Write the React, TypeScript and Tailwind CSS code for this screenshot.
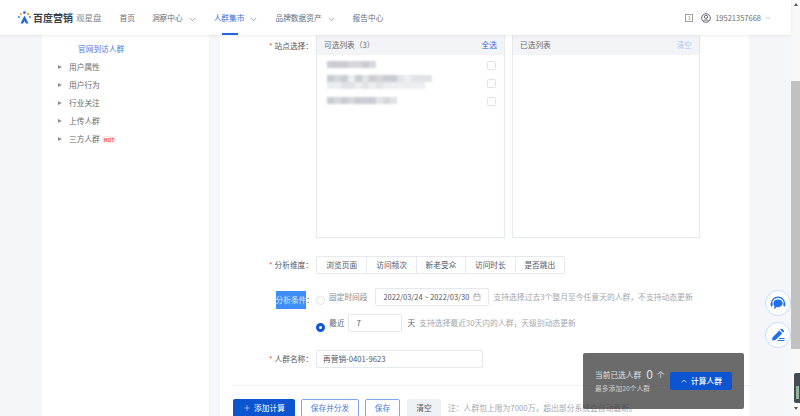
import { ChevronDown, ChevronUp, Calendar, Plus } from 'lucide-react';

const FONT = 'font-["Noto_Sans_CJK_SC","Inter",sans-serif]';

function NavItem({ label, active, menu }: { label: string; active?: boolean; menu?: boolean }) {
  return (
    <div
      className={`relative flex h-full items-center gap-[5px] text-[7.7px] ${
        active ? 'text-[#2f6fe0]' : 'text-[#6a6d75]'
      }`}
    >
      <span>{label}</span>
      {menu && <ChevronDown size={9} strokeWidth={1.6} className="translate-y-[2px] text-[#666a72]" />}
      {active && <div className="absolute bottom-0 left-[8px] h-[2px] w-[16px] bg-[#1f66e0]" />}
    </div>
  );
}

function TreeItem({ label, hot }: { label: string; hot?: boolean }) {
  return (
    <div className="flex h-[18px] items-center text-[7.7px] text-[#666a72]">
      <span className="mr-[7px] h-0 w-0 border-y-[2.5px] border-l-[4px] border-y-transparent border-l-[#8c9099]" />
      <span>{label}</span>
      {hot && (
        <span className="ml-[2px] rounded-[1px] bg-[#fdeaea] px-[2px] text-[5px] leading-[7px] font-bold text-[#e8605c]">
          HOT
        </span>
      )}
    </div>
  );
}

// site names are pixelated in the shot, so these are just colour blocks
function Mosaic({ lines }: { lines: string[][] }) {
  return (
    <div className="-translate-y-[1px] blur-[0.8px]">
      {lines.map((line, i) => (
        <div key={i} className="flex">
          {line.map((color, j) => (
            <div key={j} className={`h-[7px] w-[7px] ${color}`} />
          ))}
        </div>
      ))}
    </div>
  );
}

function BlurRow({ lines }: { lines: string[][] }) {
  return (
    <div className="flex h-[18px] items-center justify-between pr-[8px] pl-[10px]">
      <Mosaic lines={lines} />
      <div className="h-[9px] w-[9px] rounded-[1.5px] border border-[#dfe2ea] bg-white" />
    </div>
  );
}

function Label({ text }: { text: string }) {
  return (
    <div className="w-[96px] shrink-0 pr-[3px] text-right text-[7.7px] text-[#55585f]">
      <span className="mr-[2px] text-[#e0524d]">*</span>
      {text}：
    </div>
  );
}

const A = 'bg-[#c9ccd3]';
const B = 'bg-[#d6d7da]';
const C = 'bg-[#e1e3e7]';
const D = 'bg-[#eceef1]';

export default function App() {
  return (
    <div className={`relative flex h-[416px] w-[800px] overflow-hidden bg-white ${FONT}`}>
      <div className="flex w-[791px] flex-col">
        <header className="relative z-10 flex h-[35px] shrink-0 items-center bg-white pl-[18px] shadow-[0_1px_3px_rgba(0,0,0,0.07)]">
          <svg width="13" height="13" viewBox="0 0 13 13" className="mr-[2px]">
            <circle cx="6.5" cy="1.6" r="1.4" fill="#2f6fe0" />
            <circle cx="3" cy="3" r="1.1" fill="#f2a33a" />
            <circle cx="10" cy="3" r="1.2" fill="#f2a33a" />
            <circle cx="0.9" cy="6" r="0.9" fill="#2f6fe0" />
            <circle cx="12" cy="6" r="0.9" fill="#2f6fe0" />
            <path d="M6.5 4.5L10.5 12.5H8L6.5 10L5 12.5H2.5Z" fill="#1f66e0" />
          </svg>
          <span className="text-[10px] leading-none font-bold text-[#3c3f46]">百度营销</span>
          <span className="ml-[3px] text-[8.5px] text-[#85888f]">观星盘</span>
          <nav className="ml-[18px] flex h-full gap-[17px]">
            <NavItem label="首页" />
            <NavItem label="洞察中心" menu />
            <NavItem label="人群集市" menu active />
            <NavItem label="品牌数据资产" menu />
            <NavItem label="报告中心" />
          </nav>
          <div className="ml-auto flex items-center pr-[19px] text-[7.5px] text-[#6a6d75]">
            <div className="mr-[8px] flex h-[8px] w-[8px] items-center justify-center border border-[#9a9da3] text-[5px]">
              1
            </div>
            <svg width="10" height="10" viewBox="0 0 10 10" fill="none" stroke="#55585f" strokeWidth="0.9" className="mr-[4px]">
              <circle cx="5" cy="5" r="4.3" />
              <circle cx="5" cy="3.9" r="1.6" />
              <path d="M2.2 8.2C3 6.6 7 6.6 7.8 8.2" />
            </svg>
            <span>19521357668</span>
            <ChevronDown size={8} strokeWidth={1.2} className="ml-[3px] text-[#85888f]" />
          </div>
        </header>

        <div className="flex min-h-0 flex-1 bg-[#f5f6fa] pl-[42px]">
          <aside className="w-[167px] bg-white pt-[5px]">
            <div className="flex h-[18px] items-center pl-[36px] text-[7.7px] text-[#4a78d8]">官网到访人群</div>
            <div className="pl-[16px]">
              <TreeItem label="用户属性" />
              <TreeItem label="用户行为" />
              <TreeItem label="行业关注" />
              <TreeItem label="上传人群" />
              <TreeItem label="三方人群" hot />
            </div>
          </aside>

          <main className="ml-[11px] w-[529px] bg-white">
            <div className="flex h-[203px]">
              <div className="w-[96px] pt-[5px]">
                <Label text="站点选择" />
              </div>
              <div className="flex h-full w-[189px] flex-col border border-t-0 border-[#e6e8f0]">
                <div className="flex h-[20px] shrink-0 items-center justify-between bg-[#f3f4f8] px-[7px] text-[7.7px] text-[#666a72]">
                  <span>可选列表（3）</span>
                  <span className="text-[#2f6fe0]">全选</span>
                </div>
                <div className="pt-[1px]">
                  <BlurRow lines={[[A, A, A, B, B, A, B]]} />
                  <BlurRow
                    lines={[
                      [A, B, A, D, A, C, A, B, A, A, C, D, C, C, C],
                      [D, D, C, C, D, C, D, C, D, D, D, D, D, D],
                    ]}
                  />
                  <BlurRow lines={[[A, B, A, B, A, A, A, C, B, C]]} />
                </div>
              </div>
              <div className="ml-[7px] flex h-full w-[188px] flex-col border border-t-0 border-[#e6e8f0]">
                <div className="flex h-[20px] shrink-0 items-center justify-between bg-[#f3f4f8] px-[7px] text-[7.7px] text-[#666a72]">
                  <span>已选列表</span>
                  <span className="text-[#b3ccf5]">清空</span>
                </div>
              </div>
            </div>

            <div className="mt-[18px] flex h-[18px] items-center">
              <Label text="分析维度" />
              <div className="flex h-[18px] rounded-[2px] border border-[#e6e8f0] text-[7.7px] text-[#55585f]">
                {['浏览页面', '访问频次', '新老受众', '访问时长', '是否跳出'].map((t, i) => (
                  <div
                    key={t}
                    className={`flex w-[49.4px] items-center justify-center ${i > 0 ? 'border-l border-[#e6e8f0]' : ''}`}
                  >
                    {t}
                  </div>
                ))}
              </div>
            </div>

            <div className="mt-[14px] flex h-[44px]">
              <div className="flex h-[24px] w-[96px] items-center justify-end pr-[2px] text-[7.7px] text-[#55585f]">
                <span className="bg-[#3f8ef7] py-[3px] leading-[12px] text-[#dbe9ff]">分析条件</span>：
              </div>
              <div className="flex flex-col gap-[8px]">
                <div className="flex h-[18px] items-center">
                  <span className="mt-[6px] h-[9px] w-[9px] rounded-full border border-[#dfe2ea]" />
                  <span className="ml-[4px] text-[7.7px] text-[#85888f]">固定时间段</span>
                  <div className="ml-[8px] flex h-[18px] w-[114px] items-center justify-between rounded-[2px] border border-[#e6e8f0] pr-[7px] pl-[7px] text-[7.5px] text-[#55585f]">
                    <span className="whitespace-nowrap">2022/03/24 ~ 2022/03/30</span>
                    <Calendar size={8} strokeWidth={1.2} className="shrink-0 text-[#666a72]" />
                  </div>
                  <span className="ml-[4px] whitespace-nowrap text-[7.8px] text-[#a5a8ae]">支持选择过去3个整月至今任意天的人群，不支持动态更新</span>
                </div>
                <div className="flex h-[18px] items-center">
                  <span className="mt-[8px] h-[9px] w-[9px] rounded-full border-[3px] border-[#1256d2] bg-white" />
                  <span className="ml-[4px] text-[7.7px] text-[#666a72]">最近</span>
                  <div className="ml-[4px] flex h-[18px] w-[54px] items-center rounded-[2px] border border-[#e6e8f0] pl-[7px] text-[7.7px] text-[#55585f]">
                    7
                  </div>
                  <span className="ml-[5px] text-[7.7px] text-[#666a72]">天</span>
                  <span className="ml-[4px] whitespace-nowrap text-[7.8px] text-[#a5a8ae]">支持选择最近30天内的人群，天级别动态更新</span>
                </div>
              </div>
            </div>

            <div className="mt-[18px] flex h-[18px] items-center">
              <Label text="人群名称" />
              <div className="flex h-[18px] w-[167px] items-center rounded-[2px] border border-[#e6e8f0] pl-[6px] text-[7.7px] text-[#55585f]">
                再营销-0401-9623
              </div>
            </div>

            <div className="mt-[17px] ml-[13px] border-t border-[#f0f1f5]" />

            <div className="mt-[13px] ml-[13px] flex h-[18px] items-center text-[7.7px]">
              <button className="flex h-[18px] w-[62px] items-center justify-center gap-[3px] rounded-[2px] bg-[#0d54d0] text-white">
                <Plus size={8} strokeWidth={1.5} />
                添加计算
              </button>
              <button className="ml-[6px] h-[18px] w-[58px] rounded-[2px] border border-[#7ea6ea] text-[#4d7bd0]">保存并分发</button>
              <button className="ml-[6px] h-[18px] w-[35px] rounded-[2px] border border-[#7ea6ea] text-[#4d7bd0]">保存</button>
              <button className="ml-[7px] h-[18px] w-[34px] rounded-[2px] bg-[#eef0f5] text-[#55585f]">清空</button>
              <span className="ml-[7px] whitespace-nowrap text-[7.8px] text-[#a5a8ae]">注：人群包上限为7000万，超出部分系统会自动截断。</span>
            </div>
          </main>
        </div>
      </div>

      <div className="flex w-[9px] flex-col items-center bg-[#f8f8f8]">
        <span className="mt-[3px] h-0 w-0 border-x-[2px] border-b-[3px] border-x-transparent border-b-[#555]" />
        <div className="mt-[75px] h-[268px] w-full bg-[#c1c1c1]" />
        <span className="mt-[58px] h-0 w-0 border-x-[2px] border-t-[3px] border-x-transparent border-t-[#555]" />
      </div>

      {/* floating summary */}
      <div className="absolute top-[353px] left-[583px] flex h-[56px] w-[161px] items-center justify-between rounded-[2px] bg-[#3a3a3a]/75 pr-[12px] pl-[12px] text-white">
        <div>
          <div className="flex items-center text-[7.7px] text-[#e0e0e0]">
            当前已选人群
            <span className="mr-[4px] ml-[5px] text-[12px] leading-none">0</span>个
          </div>
          <div className="mt-[3px] text-[6.8px] text-[#d0d0d0]">最多添加20个人群</div>
        </div>
        <button className="flex h-[18px] w-[62px] items-center justify-center gap-[3px] rounded-[2px] bg-[#0d54d0] text-[7.7px] font-medium">
          <ChevronUp size={8} strokeWidth={2.2} />
          计算人群
        </button>
      </div>

      <div className="absolute top-[290px] left-[765px] flex h-[26px] w-[26px] items-center justify-center rounded-full border border-[#c9dcfb] bg-white">
        <svg width="16" height="15" viewBox="0 0 16 15">
          <path d="M1.6 9V7.5a6.4 6.4 0 0 1 12.8 0V9" fill="none" stroke="#1f6ff0" strokeWidth="1.2" />
          <rect x="0.6" y="6.8" width="2" height="3.6" rx="0.8" fill="#1f6ff0" />
          <rect x="13.4" y="6.8" width="2" height="3.6" rx="0.8" fill="#1f6ff0" />
          <path d="M8 3.4c2.9 0 4.6 1.7 4.6 3.9S10.9 11.2 8 11.2c-.5 0-1 0-1.4-.2L4.2 13.4l.3-3.1C3.800 9.500 3.400 8.500 3.400 7.300 3.400 5.100 5.100 3.400 8 3.400Z" fill="#1f6ff0" />
        </svg>
      </div>
      <div className="absolute top-[322px] left-[765px] flex h-[26px] w-[26px] items-center justify-center rounded-full border border-[#c9dcfb] bg-white">
        <svg width="14" height="14" viewBox="0 0 14 14">
          <path d="M1 12.500 1.700 9.300 8.400 2.600 11.200 5.400 4.500 12.100Z" fill="#1f6ff0" />
          <path d="M9.200 1.800 10 1a1 1 0 0 1 1.400 0L12.800 2.400a1 1 0 0 1 0 1.400L12 4.600Z" fill="#1f6ff0" />
          <rect x="8" y="10" width="5.500" height="1" fill="#1f6ff0" />
          <rect x="6.500" y="12" width="7" height="1" fill="#1f6ff0" />
        </svg>
      </div>

      {/* sliver of a docked widget at the window edge */}
      <div className="absolute top-[373px] left-[794px] h-[30px] w-[6px] rounded-l-[2px] bg-[#454b52] pt-[13px] pl-[2px]">
        <div className="h-[13px] w-[3px] bg-[#8fb59a]" />
      </div>
    </div>
  );
}
